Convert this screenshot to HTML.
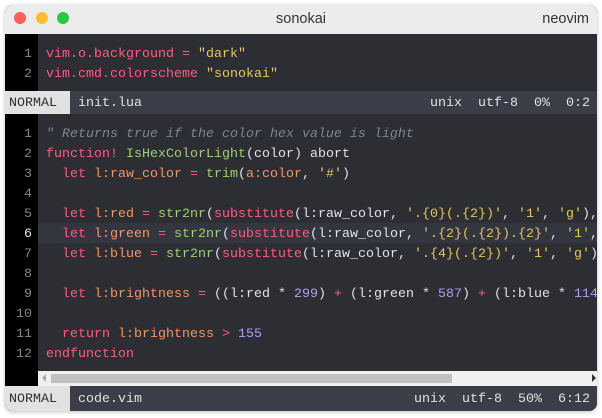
<!DOCTYPE html>
<html><head><meta charset="utf-8"><style>
*{margin:0;padding:0;box-sizing:border-box}
body{width:602px;height:418px;background:#fff;position:relative;overflow:hidden;font-family:"Liberation Mono",monospace;font-size:13.33px}
.win{position:absolute;left:5px;top:5px;width:592px;height:406px;border-radius:8px;overflow:hidden;background:#2c2e34;box-shadow:0 1px 4px rgba(0,0,0,.25)}
.tb{position:absolute;left:0;top:0;width:592px;height:29px;background:#ececec;color:#333;font-family:"Liberation Sans",sans-serif;font-size:14.5px}
.dot{position:absolute;top:7px;width:12px;height:12px;border-radius:50%}
.gut{position:absolute;left:0;width:33px;background:#000}
.ln{position:absolute;left:0;width:27px;text-align:right;color:#7f8490;height:20px;line-height:20px;white-space:pre;margin-top:3px}
.cl{position:absolute;left:41px;height:20px;line-height:20px;white-space:pre;color:#e2e2e3;margin-top:3px}
.sb{position:absolute;left:0;width:592px;height:23px;background:#3b3e48;color:#e2e2e3;line-height:25px;white-space:pre}
.mode{position:absolute;left:0;top:0;width:65px;height:100%;background:#e2e2e3;color:#2c2e34;padding-left:4px}
.r{color:#fc5d7c}.g{color:#9ed072}.y{color:#e7c664}.o{color:#f39660}.p{color:#b39df3}.c{color:#7f8490;font-style:italic}
</style></head><body>
<div class="win">
<div class="tb">
<div class="dot" style="left:9px;background:#fe5f57"></div>
<div class="dot" style="left:31px;background:#febc2e"></div>
<div class="dot" style="left:52px;background:#28c840"></div>
<div style="position:absolute;left:0;width:592px;text-align:center;top:6px">sonokai</div>
<div style="position:absolute;right:8px;top:6px">neovim</div>
</div>
<div class="gut" style="top:29px;height:57px"></div>
<div class="ln" style="top:37px">1</div><div class="ln" style="top:57px">2</div>
<div class="cl r" style="top:37px">vim.o.background = <span class="y">"dark"</span></div>
<div class="cl r" style="top:57px">vim.cmd.colorscheme <span class="y">"sonokai"</span></div>
<div class="sb" style="top:86px"><div class="mode">NORMAL</div><span style="position:absolute;left:73px">init.lua</span><span style="position:absolute;right:7px">unix  utf-8  0%  0:2</span></div>
<div class="gut" style="top:109px;height:272px"></div>
<div style="position:absolute;left:33px;top:218px;width:559px;height:20px;background:#33353f"></div>
<div class="ln" style="top:117px">1</div><div class="ln" style="top:137px">2</div><div class="ln" style="top:157px">3</div><div class="ln" style="top:177px">4</div><div class="ln" style="top:197px">5</div><div class="ln" style="top:217px;color:#e2e2e3">6</div><div class="ln" style="top:237px">7</div><div class="ln" style="top:257px">8</div><div class="ln" style="top:277px">9</div><div class="ln" style="top:297px">10</div><div class="ln" style="top:317px">11</div><div class="ln" style="top:337px">12</div>
<div class="cl c" style="top:117px">" Returns true if the color hex value is light</div>
<div class="cl" style="top:137px"><span class="r">function!</span> <span class="g">IsHexColorLight</span>(color) abort</div>
<div class="cl" style="top:157px">  <span class="r">let</span> <span class="o">l:raw_color</span> <span class="r">=</span> <span class="g">trim</span>(<span class="o">a:color</span>, <span class="y">'#'</span>)</div>
<div class="cl" style="top:197px">  <span class="r">let</span> <span class="o">l:red</span> <span class="r">=</span> <span class="g">str2nr</span>(<span class="r">substitute</span>(l:raw_color, <span class="y">'.{0}(.{2})'</span>, <span class="y">'1'</span>, <span class="y">'g'</span>),</div>
<div class="cl" style="top:217px">  <span class="r">let</span> <span class="o">l:green</span> <span class="r">=</span> <span class="g">str2nr</span>(<span class="r">substitute</span>(l:raw_color, <span class="y">'.{2}(.{2}).{2}'</span>, <span class="y">'1'</span>,</div>
<div class="cl" style="top:237px">  <span class="r">let</span> <span class="o">l:blue</span> <span class="r">=</span> <span class="g">str2nr</span>(<span class="r">substitute</span>(l:raw_color, <span class="y">'.{4}(.{2})'</span>, <span class="y">'1'</span>, <span class="y">'g'</span>)</div>
<div class="cl" style="top:277px">  <span class="r">let</span> <span class="o">l:brightness</span> <span class="r">=</span> ((l:red * <span class="p">299</span>) <span class="r">+</span> (l:green * <span class="p">587</span>) <span class="r">+</span> (l:blue * <span class="p">114</span></div>
<div class="cl" style="top:317px">  <span class="r">return</span> <span class="o">l:brightness</span> <span class="r">&gt;</span> <span class="p">155</span></div>
<div class="cl r" style="top:337px">endfunction</div>
<div style="position:absolute;left:33px;top:366px;width:559px;height:15px;background:#f0f0f0"></div>
<div style="position:absolute;left:46px;top:369px;width:401px;height:9px;background:#c0c0c0"></div>
<div style="position:absolute;left:37px;top:369px;width:0;height:0;border-top:4px solid transparent;border-bottom:4px solid transparent;border-right:4px solid #aaa"></div>
<div style="position:absolute;left:587px;top:369px;width:0;height:0;border-top:4px solid transparent;border-bottom:4px solid transparent;border-left:4px solid #333"></div>
<div class="sb" style="top:381px;height:25px;line-height:27px"><div class="mode">NORMAL</div><span style="position:absolute;left:73px">code.vim</span><span style="position:absolute;right:7px">unix  utf-8  50%  6:12</span></div>
</div>
</body></html>
